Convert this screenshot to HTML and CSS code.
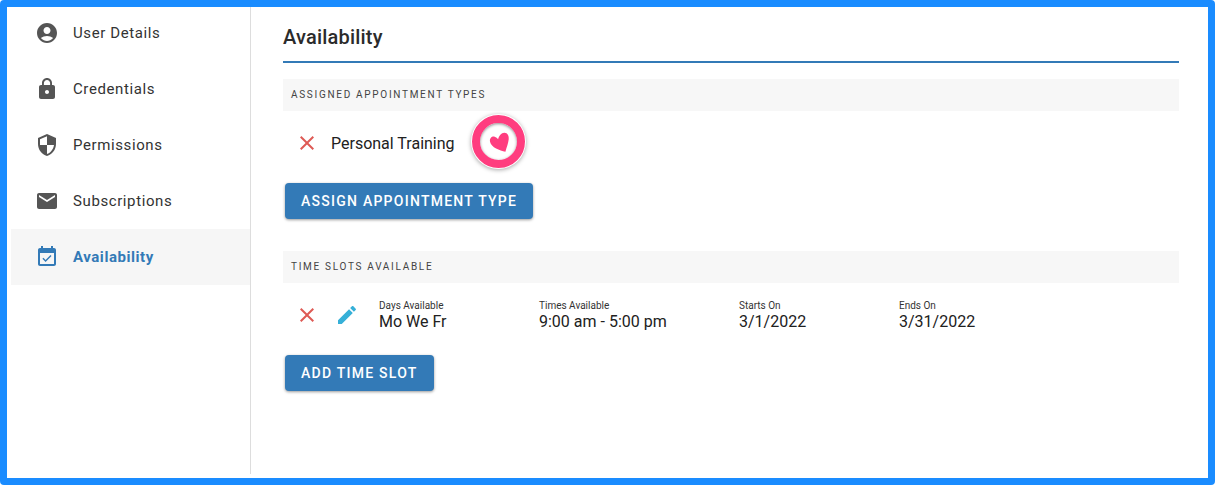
FILE: index.html
```html
<!DOCTYPE html>
<html lang="en">

<head>
    <meta charset="UTF-8">
    <meta name="viewport" content="width=device-width, initial-scale=1.0">
    <title>Availability</title>
    <link rel="stylesheet" href="styles.css">
</head>

<body>
    <div class="frame">
        <nav class="sidebar">
            <a class="nav-item">
                <svg class="icon" viewBox="0 0 24 24"><path d="M12 2C6.48 2 2 6.48 2 12s4.48 10 10 10 10-4.48 10-10S17.52 2 12 2zm0 4c1.93 0 3.5 1.57 3.5 3.5S13.93 13 12 13s-3.5-1.57-3.5-3.5S10.07 6 12 6zm0 14c-2.03 0-4.43-.82-6.14-2.88C7.55 15.8 9.68 15 12 15s4.45.8 6.14 2.12C16.43 19.18 14.03 20 12 20z"/></svg>
                User Details
            </a>
            <a class="nav-item">
                <svg class="icon" viewBox="0 0 24 24"><path d="M18 8h-1V6c0-2.76-2.24-5-5-5S7 3.24 7 6v2H6c-1.1 0-2 .9-2 2v10c0 1.1.9 2 2 2h12c1.1 0 2-.9 2-2V10c0-1.1-.9-2-2-2zm-6 9c-1.1 0-2-.9-2-2s.9-2 2-2 2 .9 2 2-.9 2-2 2zm3.1-9H8.9V6c0-1.71 1.39-3.1 3.1-3.1 1.71 0 3.1 1.39 3.1 3.1v2z"/></svg>
                Credentials
            </a>
            <a class="nav-item">
                <svg class="icon" viewBox="0 0 24 24"><path d="M12 1L3 5v6c0 5.55 3.84 10.74 9 12 5.16-1.26 9-6.45 9-12V5l-9-4zm0 10.99h7c-.53 4.12-3.28 7.79-7 8.94V12H5V6.3l7-3.11v8.8z"/></svg>
                Permissions
            </a>
            <a class="nav-item">
                <svg class="icon" viewBox="0 0 24 24"><path d="M20 4H4c-1.1 0-1.99.9-1.99 2L2 18c0 1.1.9 2 2 2h16c1.1 0 2-.9 2-2V6c0-1.1-.9-2-2-2zm0 4l-8 5-8-5V6l8 5 8-5v2z"/></svg>
                Subscriptions
            </a>
            <a class="nav-item active">
                <svg class="icon" viewBox="0 0 24 24"><path d="M16.53 11.06L15.47 10l-4.88 4.88-2.12-2.12-1.06 1.06L10.59 17l5.94-5.94zM19 3h-1V1h-2v2H8V1H6v2H5c-1.11 0-1.99.9-1.99 2L3 19c0 1.1.89 2 2 2h14c1.1 0 2-.9 2-2V5c0-1.1-.9-2-2-2zm0 16H5V8h14v11z"/></svg>
                Availability
            </a>
        </nav>

        <main class="content">
            <h1 class="page-title">Availability</h1>

            <h2 class="section-bar">Assigned Appointment Types</h2>
            <div class="type-row">
                <svg class="icon icon-delete" viewBox="0 0 24 24"><path d="M19 6.41L17.59 5 12 10.59 6.41 5 5 6.41 10.59 12 5 17.59 6.41 19 12 13.41 17.59 19 19 17.59 13.41 12z"/></svg>
                <span class="type-name">Personal Training</span>
                <span class="marker">
                    <svg class="marker-heart" viewBox="0 0 24 24"><path d="M19 22.5C13 21 3.5 18 2.2 11.6 1.5 8 4.2 5.6 7.2 6.2c1.7.4 3 1.4 3.8 2.8C12 5.4 14.6 1.8 18 2c3.4.2 5 3.2 4.6 7-.4 4.4-2.4 9-3.6 13.5z"/></svg>
                </span>
            </div>
            <button class="btn">Assign Appointment Type</button>

            <h2 class="section-bar second">Time Slots Available</h2>
            <div class="slot-row">
                <svg class="icon icon-delete" viewBox="0 0 24 24"><path d="M19 6.41L17.59 5 12 10.59 6.41 5 5 6.41 10.59 12 5 17.59 6.41 19 12 13.41 17.59 19 19 17.59 13.41 12z"/></svg>
                <svg class="icon icon-edit" viewBox="0 0 24 24"><path d="M3 17.25V21h3.75L17.81 9.94l-3.75-3.75L3 17.25zM20.71 7.04c.39-.39.39-1.02 0-1.41l-2.34-2.34c-.39-.39-1.02-.39-1.41 0l-1.83 1.83 3.75 3.75 1.83-1.83z"/></svg>
                <div class="slot-col">
                    <span class="slot-label">Days Available</span>
                    <span class="slot-value">Mo We Fr</span>
                </div>
                <div class="slot-col wide">
                    <span class="slot-label">Times Available</span>
                    <span class="slot-value">9:00 am - 5:00 pm</span>
                </div>
                <div class="slot-col">
                    <span class="slot-label">Starts On</span>
                    <span class="slot-value">3/1/2022</span>
                </div>
                <div class="slot-col">
                    <span class="slot-label">Ends On</span>
                    <span class="slot-value">3/31/2022</span>
                </div>
            </div>
            <button class="btn">Add Time Slot</button>
        </main>
    </div>
</body>

</html>
```

FILE: styles.css
```css
* {
    box-sizing: border-box;
}

html, body {
    height: 100%;
}

body {
    margin: 0;
    background: #fff;
    color: #212121;
    font-family: Roboto, "Liberation Sans", sans-serif;
}

.frame {
    display: flex;
    height: 485px;
    border: 7px solid #1a8cff;
    border-radius: 4px;
    overflow: hidden;
    background: #fff;
}

.sidebar {
    width: 240px;
    height: 469px;
    margin-top: -2px;
    margin-left: 4px;
    border-right: 1px solid #ddd;
    flex-shrink: 0;
}

.nav-item {
    display: flex;
    align-items: center;
    gap: 14px;
    height: 56px;
    padding-left: 24px;
    font-size: 15px;
    letter-spacing: 0.6px;
    color: #333;
}

.nav-item .icon {
    fill: #555;
}

.nav-item.active {
    background: #f6f6f6;
    color: #337ab7;
    font-weight: 700;
    letter-spacing: 0.55px;
}

.nav-item.active .icon {
    fill: #337ab7;
}

.icon {
    width: 24px;
    height: 24px;
    flex-shrink: 0;
}

.content {
    flex: 1;
    padding: 0 29px 0 32px;
}

.page-title {
    margin: 0 0 16px;
    height: 56px;
    padding-top: 16px;
    border-bottom: 2px solid #337ab7;
    font-size: 20px;
    line-height: 28px;
    font-weight: 500;
    letter-spacing: 0.2px;
    color: #2b2b2b;
}

.section-bar {
    margin: 0;
    height: 32px;
    padding-left: 8px;
    background: #f7f7f7;
    font-size: 10px;
    line-height: 32px;
    font-weight: 400;
    letter-spacing: 1.7px;
    text-transform: uppercase;
    color: #444;
}

.section-bar.second {
    margin-top: 32px;
}

.type-row {
    position: relative;
    display: flex;
    align-items: center;
    gap: 12px;
    height: 64px;
    padding-left: 12px;
    margin-bottom: 8px;
}

.type-name {
    font-size: 16px;
}

.icon-delete {
    fill: #de5a55;
}

.icon-edit {
    fill: #36b0d8;
    margin-left: 16px;
    margin-right: 20px;
}

/* annotation sitting over the row */
.marker {
    position: absolute;
    left: 189px;
    top: 4px;
    width: 53px;
    height: 53px;
    display: flex;
    align-items: center;
    justify-content: center;
    border: 8px solid #ff3d7f;
    border-radius: 50%;
    background: #fff;
    box-shadow: 0 0 0 1px #fff, 0 1px 4px 1px rgba(0, 0, 0, 0.35), inset 0 1px 3px rgba(0, 0, 0, 0.45);
}

.marker-heart {
    width: 22px;
    height: 22px;
    fill: #ff3d7f;
}

.btn {
    display: block;
    height: 36px;
    margin-left: 2px;
    padding: 0 16px;
    border: none;
    border-radius: 4px;
    background: #337ab7;
    color: #fff;
    font-family: inherit;
    font-size: 14px;
    font-weight: 500;
    letter-spacing: 1.25px;
    text-transform: uppercase;
    box-shadow: 0 1px 3px rgba(0, 0, 0, 0.4);
}

.slot-row {
    display: flex;
    align-items: center;
    height: 64px;
    padding-left: 12px;
    margin-bottom: 8px;
}

.slot-col {
    display: flex;
    flex-direction: column;
    width: 160px;
    padding-top: 2px;
}

.slot-col.wide {
    width: 200px;
}

.slot-label {
    font-size: 10px;
    line-height: 12px;
    color: #333;
}

.slot-value {
    font-size: 16px;
    line-height: 20px;
}
```
